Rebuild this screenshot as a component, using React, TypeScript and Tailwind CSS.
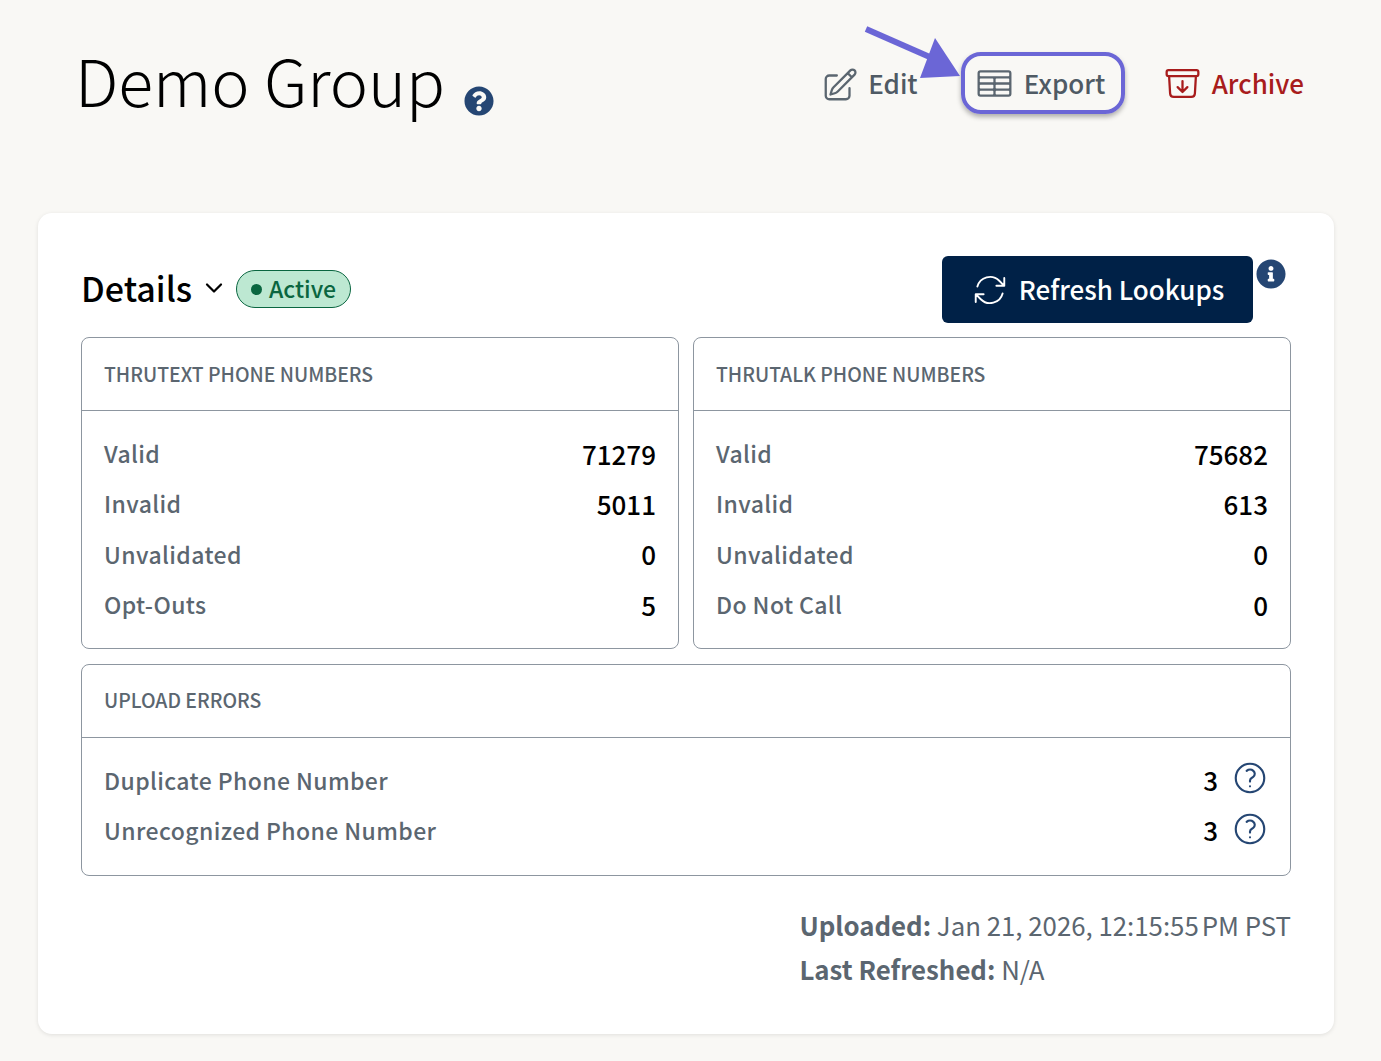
import { ChevronDown } from "lucide-react";
import { FaQuestionCircle, FaInfoCircle } from "react-icons/fa";
import {
  HiOutlineArchiveBoxArrowDown,
  HiOutlineArrowPath,
  HiOutlinePencilSquare,
  HiOutlineQuestionMarkCircle,
  HiOutlineTableCells,
} from "react-icons/hi2";

const font = "font-['Noto_Sans_CJK_JP','Noto_Sans',sans-serif]";

const StatRow = ({ label, value }: { label: string; value: string }) => (
  <div className="flex h-[50.4px] items-center justify-between">
    <span className="text-[23px] font-medium tracking-[0.4px] text-[#5b6670]">{label}</span>
    <span className="text-[26px] font-medium text-black">{value}</span>
  </div>
);

const ErrorRow = ({ label, value }: { label: string; value: string }) => (
  <div className="flex h-[50.4px] items-center justify-between">
    <span className="text-[23px] font-medium tracking-[0.4px] text-[#5b6670]">{label}</span>
    <div className="flex items-center">
      <span className="pb-[2px] text-[26px] font-medium text-black">{value}</span>
      <HiOutlineQuestionMarkCircle className="mb-1 ml-[13px] mr-[-4px] size-[38px] text-[#254673]" strokeWidth={1.35} />
    </div>
  </div>
);

const Panel = ({ title, rows }: { title: string; rows: [string, string][] }) => (
  <div className="flex-1 rounded-lg border border-[#8d96a0] bg-white">
    <div className="flex h-[73px] items-center border-b border-[#8d96a0] px-[22px] pb-[1px] text-[19.4px] font-medium text-[#5b6670]">
      {title}
    </div>
    <div className="px-[22px] pb-[18.4px] pt-[17px]">
      {rows.map(([label, value]) => (
        <StatRow key={label} label={label} value={value} />
      ))}
    </div>
  </div>
);

export default function App() {
  return (
    <div className={`${font} relative min-h-[1061px] bg-[#f9f8f5] pl-[38px] pr-[47px]`}>
      {/* Header */}
      <div className="flex h-[213px] items-start justify-between pl-[37px] pr-[30px] pt-[52px]">
        <div className="flex items-start">
          <h1 className="mt-[-4px] text-[64.5px] font-light leading-[62px] text-black">Demo Group</h1>
          <FaQuestionCircle className="ml-[19px] mt-[34px] size-[30px] text-[#254673]" />
        </div>
        <div className="flex items-center font-medium">
          <button className="flex items-center gap-[9px] text-[26px] text-[#4f5a64]">
            <HiOutlinePencilSquare className="mt-[3px] size-[38px] text-[#5b6670]" strokeWidth={1.45} />
            <span className="pb-[2px]">Edit</span>
          </button>
          <button className="ml-[43px] flex h-[62px] w-[164px] items-center gap-[10px] rounded-[20px] border-4 border-[#6b66d6] pl-[10px] text-[26px] text-[#4f5a64] shadow-[0_3px_5px_rgba(0,0,0,0.3)]">
            <HiOutlineTableCells className="size-[39px] text-[#5b6670]" strokeWidth={1.4} />
            <span className="pb-[2px]">Export</span>
          </button>
          <button className="ml-[38px] flex items-center gap-[10px] text-[26px] text-[#a81c1c]">
            <HiOutlineArchiveBoxArrowDown className="size-[39px]" strokeWidth={1.4} />
            <span className="pb-[2px]">Archive</span>
          </button>
        </div>
      </div>

      {/* Arrow pointing at the export button */}
      <svg className="absolute left-[864px] top-[26px] h-[54px] w-[98px]" viewBox="0 0 98 54" fill="none">
        <path d="M2 3L68 32" stroke="#6b66d6" strokeWidth="6" />
        <path d="M71 12L96 50L56 52Z" fill="#6b66d6" />
      </svg>

      {/* Details card */}
      <div className="h-[821px] rounded-[14px] bg-white px-[43px] pt-[43px] shadow-[0_1px_4px_rgba(0,0,0,0.1)]">
        <div className="flex h-[81px] items-start justify-between">
          <div className="flex items-center pt-[14px]">
            <span className="mt-[-3px] text-[34px] font-medium leading-[38px] text-black">Details</span>
            <ChevronDown className="ml-[8px] mt-[-2px] size-[28px] text-black" strokeWidth={1.9} />
            <span className="ml-[8px] flex h-[38px] w-[115px] items-center justify-center gap-[7px] rounded-full border border-[#0a6640] bg-[#bde8d2] text-[23px] font-medium text-[#0a6640]">
              <span className="size-[11px] rounded-full bg-[#0a6640]" />
              <span className="pb-[2px]">Active</span>
            </span>
          </div>
          <div className="flex items-start">
            <button className="flex h-[67px] w-[311px] items-center justify-center gap-[10px] rounded-md bg-[#002147] text-[26px] font-medium text-white">
              <HiOutlineArrowPath className="size-[38px]" strokeWidth={1.2} />
              <span className="pb-[2px]">Refresh Lookups</span>
            </button>
            <FaInfoCircle className="ml-[3px] mr-[5px] mt-[3px] size-[30px] text-[#254673]" />
          </div>
        </div>

        <div className="flex gap-[14px]">
          <Panel
            title="THRUTEXT PHONE NUMBERS"
            rows={[["Valid", "71279"], ["Invalid", "5011"], ["Unvalidated", "0"], ["Opt-Outs", "5"]]}
          />
          <Panel
            title="THRUTALK PHONE NUMBERS"
            rows={[["Valid", "75682"], ["Invalid", "613"], ["Unvalidated", "0"], ["Do Not Call", "0"]]}
          />
        </div>

        <div className="mt-[15px] rounded-lg border border-[#8d96a0]">
          <div className="flex h-[73px] items-center border-b border-[#8d96a0] px-[22px] pb-[2px] text-[19.4px] font-medium text-[#5b6670]">
            UPLOAD ERRORS
          </div>
          <div className="pb-[19px] pl-[22px] pr-[25px] pt-[17px]">
            <ErrorRow label="Duplicate Phone Number" value="3" />
            <ErrorRow label="Unrecognized Phone Number" value="3" />
          </div>
        </div>

        <div className="ml-auto mt-[27px] w-fit text-[25.8px] leading-[44px] text-[#5b6670]">
          <div><span className="font-bold">Uploaded:</span> Jan 21, 2026, 12:15:55{"\u202f"}PM PST</div>
          <div><span className="font-bold">Last Refreshed:</span> N/A</div>
        </div>
      </div>
    </div>
  );
}
